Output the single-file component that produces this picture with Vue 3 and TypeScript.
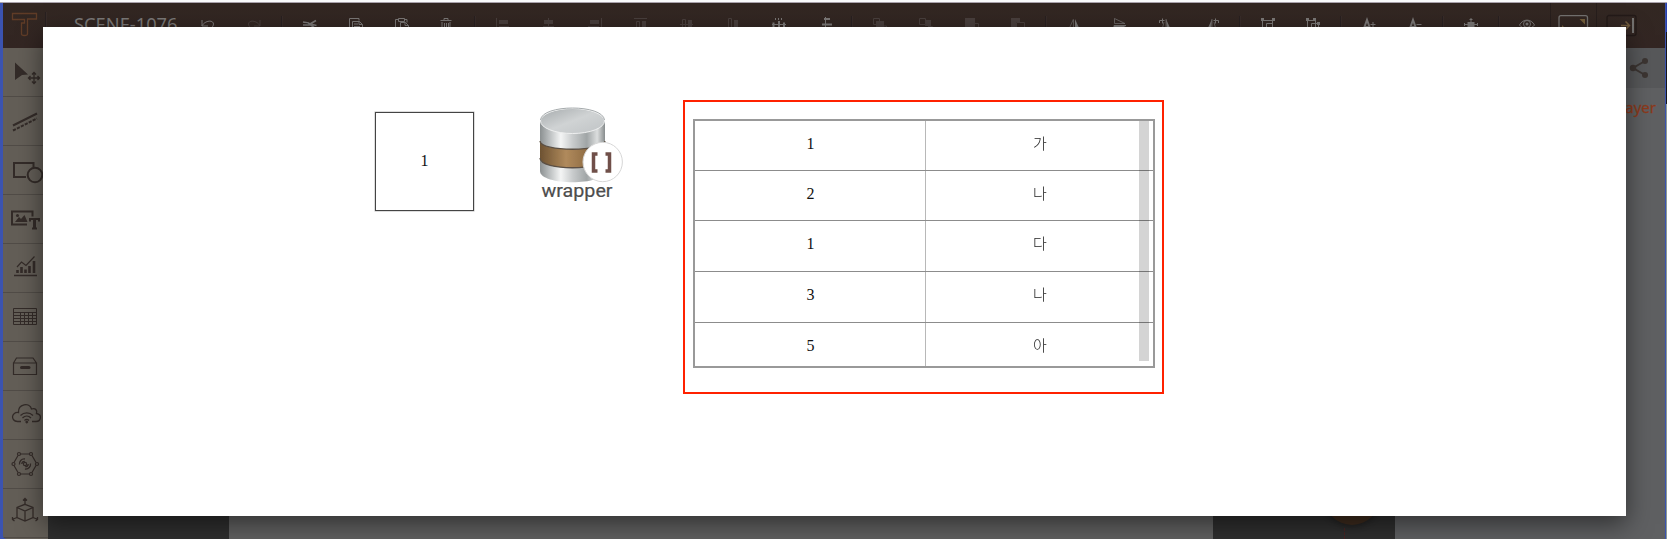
<script setup lang="ts">
interface Tool { name: string; dim?: boolean; svg: string }

const groups: Tool[][] = [
  [
    { name: 'undo', svg: '<path d="M6 6v6h6M6 12C8 7 17 5 17.500 10c0 3-3 5-5 5" fill="none"/>' },
    { name: 'redo', dim: true, svg: '<path d="M18 6v6h-6M18 12C16 7 7 5 6.500 10c0 3 3 5 5 5" fill="none"/>' },
  ],
  [
    { name: 'cut', svg: '<path d="M5 8l5.500 1 6 5M18 6.500l-6 3.500M5 11h7M18.500 11.500l-6-1.500" stroke-width="1.700"/>' },
    { name: 'copy', svg: '<path d="M9 17H5.500V4.500h9.500v2M8.500 7.500h7l3 3v9h-10zM15 7.500v3h3.500M10 10h4M10 12.500h6" fill="none"/>' },
    { name: 'paste', svg: '<path d="M9 17H5.500V5.500h3M14 5.500h3v3M8.500 4.500h6v3h-6zM10.500 8.500h5l3 3v8h-8zM15 8.500v3h3.500" fill="none"/>' },
    { name: 'trash', svg: '<path d="M5.500 6.500h11M9 6V4.500h4V6M7 8v12h8V8M9.500 9v9M11.500 9v9M13.500 9v9" fill="none"/>' },
  ],
  [
    { name: 'align-left', dim: true, svg: '<path d="M5.500 4v16M8 12.500h10"/><path d="M8 6h9v4H8z" fill="currentColor" stroke="none"/>' },
    { name: 'align-center', dim: true, svg: '<path d="M11.500 4v16M6 12.500h11"/><path d="M7 6h9v4H7z" fill="currentColor" stroke="none"/>' },
    { name: 'align-right', dim: true, svg: '<path d="M18.500 4v16M5 12.500h11"/><path d="M7 6h9v4H7z" fill="currentColor" stroke="none"/>' },
    { name: 'align-top', dim: true, svg: '<path d="M5 4.500h13M7.500 20V7.500h3V20" fill="none"/><path d="M13 7h4v9h-4z" fill="currentColor" stroke="none"/>' },
    { name: 'align-middle', dim: true, svg: '<path d="M5 10.500h13M7.500 17V5.500h3V17" fill="none"/><path d="M13 6h4v9h-4z" fill="currentColor" stroke="none"/>' },
    { name: 'align-bottom', dim: true, svg: '<path d="M7.500 18V4.500h3V18" fill="none"/><path d="M13 6h4v12h-4z" fill="currentColor" stroke="none"/>' },
    { name: 'spread-x', svg: '<path d="M8.500 4v2M11.500 4v2M14.500 4v2M5 10.500h14" /><path d="M6.500 8.500v7M12 7v9M17 8.500v7" stroke-width="2"/>' },
    { name: 'spread-y', svg: '<path d="M12.500 3v17"/><path d="M11 5h6M9 10.500h10" stroke-width="2"/>' },
  ],
  [
    { name: 'front', dim: true, svg: '<path d="M8 10.500H5.500v-6h6V7M14 12h4.500v7h-6" fill="none"/><path d="M8 7h8v8H8z" fill="currentColor" stroke="none"/>' },
    { name: 'forward', dim: true, svg: '<path d="M5.500 4.500h6v6h-6zM14 12.500h4.500v6h-6" fill="none"/><path d="M12 6h5v6h-6z" fill="currentColor" stroke="none"/>' },
    { name: 'backward', dim: true, svg: '<path d="M15 9.500h3.500v9h-8" fill="none"/><path d="M5 4h10v10H5z" fill="currentColor" stroke="none"/>' },
    { name: 'back', dim: true, svg: '<path d="M5 4h9v4h-4v6H5z" fill="currentColor" stroke="none"/><path d="M10.500 8.500h8v9h-8z" fill="none"/>' },
  ],
  [
    { name: 'flip-x', svg: '<path d="M11.500 5L7 15M11.500 6v10" fill="none" opacity=".6"/><path d="M13 5l5 11h-5z" fill="currentColor" stroke="none"/>' },
    { name: 'flip-y', svg: '<path d="M6.500 4.500v5H17z" fill="none" opacity=".7"/><path d="M6 11.500h12l-12 5z" fill="currentColor"/>' },
    { name: 'rotate-right', svg: '<path d="M5.500 9V6.500h5M8.500 4.500v5" fill="none"/><path d="M12 5v11M10 8l-2 8" opacity=".7"/><path d="M12 5l5 11h-4z" fill="currentColor" stroke="none"/>' },
    { name: 'rotate-left', svg: '<path d="M18.500 9V6.500h-5M15.500 4.500v5" fill="none"/><path d="M12 5v11M14 8l2 8" opacity=".7"/><path d="M12 5L7 16h4z" fill="currentColor" stroke="none"/>' },
  ],
  [
    { name: 'group', svg: '<path d="M6.500 6.500h10v10h-10zM10.500 9.500h6v6h-6z" fill="none"/><path d="M5 4h3v3H5zM16 4h3v3h-3z" fill="currentColor" stroke="none"/>' },
    { name: 'ungroup', svg: '<path d="M6.500 6.500h8v7h-8zM10.500 9.500h7v7h-7z" fill="none"/><path d="M5 4h3v3H5zM12 4h3v3h-3zM16 8h3v3h-3z" fill="currentColor" stroke="none"/>' },
  ],
  [
    { name: 'font-up', svg: '<path d="M6 17l4-11 4 11M7.500 13h5" fill="none" stroke-width="2"/><path d="M13.500 10.500h5M16 8v5"/>' },
    { name: 'font-down', svg: '<path d="M6 17l4-11 4 11M7.500 13h5" fill="none" stroke-width="2"/><path d="M13.500 10.500h5"/>' },
  ],
  [{ name: 'fit', svg: '<path d="M12 4v16M5 10.500h14M10.500 5.500h3M5.500 9v3M18.500 9v3"/><path d="M8.500 8h7v6h-7z" fill="currentColor" stroke="none"/>' }],
  [{ name: 'preview', svg: '<path d="M4.500 11C8 4.500 16 4.500 19.500 11 16 16 8 16 4.500 11z" fill="none"/><circle cx="12" cy="10" r="3.500" fill="none"/><circle cx="12" cy="10" r="1.500" fill="currentColor" stroke="none"/>' }],
]

const side: string[] = [
  '<path d="M12 14.500L25 26.500l-6 .5-7 5z" fill="currentColor" stroke="none"/><path d="M31 24.500v11M25.500 30h11M29 26.500l2-2 2 2M29 33.500l2 2 2-2M27.500 28l-2 2 2 2M34.500 28l2 2-2 2" fill="none" stroke-width="1.300"/>',
  '<path d="M10 28.500L34 16.500" stroke-width="2"/><path d="M10 33.500L34 21.500" stroke-width="2" stroke-dasharray="3.200 1.200"/>',
  '<path d="M23 31H11V17h19.500v4" fill="none" stroke-width="2"/><circle cx="32" cy="29" r="7.300" fill="none" stroke-width="2"/>',
  '<path d="M24 29.500H9v-13h20.500v5" fill="none" stroke-width="2"/><circle cx="14.500" cy="20.500" r="1.500" fill="currentColor" stroke="none"/><path d="M12 27l4-5 2 2 3.500-4 3 7z" fill="currentColor" stroke="none"/><path d="M27 26.500V24h9v2.500M29 33.500h5" fill="none" stroke-width="2"/><path d="M31.500 24v10" stroke-width="3"/>',
  '<path d="M11 31.500h23" stroke-width="1.500"/><path d="M14.500 29v-3M18.500 29v-6M22.500 29v-3.500M26.500 29v-7M31 29V17" stroke-width="2.600"/><path d="M14 23l4.500-5 4.500 3.500 8.500-9" fill="none" stroke-width="1.200"/>',
  '<path d="M10.500 15.500h23v16h-23zM10.500 19.500h23M10.500 22.500h23M10.500 25.500h23M10.500 28.500h23M17.500 19.500v12M21.500 19.500v12M25.500 19.500v12M29.500 19.500v12" fill="none"/>',
  '<path d="M10.500 21h23v11.500h-23zM10.500 21l3-5h16.500l3.500 5" fill="none" stroke-width="1.200"/><path d="M18.500 25.500h7.500" stroke-width="3" stroke-linecap="round"/>',
  '<path d="M18 30.500h-3.500C7 30 8.500 20.500 15.500 21.500 15 13 26.500 11 28.500 18c4-1.500 6 1.500 5 4.500 6 1 4.500 8-.5 8h-4" fill="none" stroke-width="1.300"/><path d="M17.500 24.500c3.500-3.500 9-3.500 12.500 0M19.500 27c2.500-2.500 6-2.500 8.500 0M21.500 29.500c1.500-1.500 3-1.500 4.500 0" fill="none" stroke-width="1.300"/><circle cx="23.800" cy="31" r="1" fill="currentColor"/>',
  '<g fill="none" stroke-width="1.200"><path d="M17.500 14h9M29 15.500l4 7M33 25.500l-4 7M26.500 34h-9M15 32.500l-4-7M11 22.500l4-7"/><circle cx="16" cy="14" r="1.500"/><circle cx="28" cy="14" r="1.500"/><circle cx="34" cy="24" r="1.500"/><circle cx="28" cy="34" r="1.500"/><circle cx="16" cy="34" r="1.500"/><circle cx="10.500" cy="24" r="1.500"/><circle cx="22" cy="24" r="1.600"/><path d="M16.500 24.500c-.5-3 2-6 5.500-5.500M18.800 24c0-1.500 1.200-2.700 3-2.700M27.500 23.500c.5 3-2 6-5.500 5.500M25.200 24c0 1.500-1.200 2.700-3 2.700" stroke-width="1.300"/></g>',
  '<g fill="none" stroke-width="1.300"><path d="M22 15.300l8 3.200v10l-8 3.500-8-3.500v-10zM14 18.500l8 3.500 8-3.500M22 22v10"/><path d="M22 15V9.500M20 11.500l2-2 2 2M14 28.500l-5 2M9.500 28v2.500l2 1.500M30 28.500l5 2M34.500 28v2.500l-2 1.500"/></g>',
]

const rows: [string, string][] = [['1', '가'], ['2', '나'], ['1', '다'], ['3', '나'], ['5', '아']]
</script>

<template>
  <div class="shell">
    <div class="topline"></div>
    <header class="bar">
      <svg class="logo" width="40" height="45" viewBox="0 0 40 45"><path d="M9.500 10.500h24v5.500h-9v15c0 2-6 2-6 0v-11h3v-3.500H9.500z" fill="none" stroke="#603c27" stroke-width="1.300" /></svg>
      <i class="sep first"></i>
      <span class="title">SCENE-1076</span>
      <template v-for="(g, gi) in groups" :key="gi">
        <i v-if="gi" class="sep"></i>
        <span v-for="t in g" :key="t.name" class="tool" :class="{ dim: t.dim }">
          <svg width="24" height="24" viewBox="0 0 24 24" v-html="t.svg"></svg>
        </span>
      </template>
      <div class="cell"><svg width="32" height="24" viewBox="0 0 32 24"><rect x="2" y="1.700" width="28.500" height="21" rx="2" fill="none" stroke="#747270" stroke-width="1.300" /><path d="M22.500 5H28v5.500zM5 11v7h7z" fill="#755f3c" /></svg></div>
      <div class="cell last"><svg width="32" height="24" viewBox="0 0 32 24"><rect x="1" y="1.500" width="29" height="20" rx="2" fill="none" stroke="#231a18" stroke-width="1.300" /><path d="M15 11.500h8M19.500 7.500l4 4-4 4" fill="none" stroke="#705a3c" stroke-width="1.500" /><path d="M27 4v15" stroke="#747270" stroke-width="2" /></svg></div>
    </header>
    <div class="body">
      <nav class="side">
        <div v-for="(s, i) in side" :key="i" class="item"><svg width="45" height="48" viewBox="0 0 45 48" v-html="s"></svg></div>
      </nav>
      <div class="panel dark left"></div>
      <div class="canvas"></div>
      <div class="panel dark right">
        <div class="fab"></div>
        <div class="guide"></div>
      </div>
      <aside class="props">
        <div class="share"><svg width="22" height="24" viewBox="0 0 22 24" fill="#3c3532"><path d="M17 5L5 12l12 7" fill="none" stroke="#3c3532" stroke-width="2" /><circle cx="17" cy="5" r="3" /><circle cx="5" cy="12" r="3.200" /><circle cx="17" cy="19" r="3" /></svg></div>
        <div class="layer">Layer</div>
      </aside>
    </div>
    <div class="edge"><i class="blue"></i><i class="black"></i></div>

    <section class="modal">
      <div class="box">1</div>
      <svg class="db" width="92" height="100" viewBox="0 0 92 100">
        <defs>
          <linearGradient id="metal"><stop offset="0" stop-color="#8b9091" /><stop offset=".12" stop-color="#b2b6b7" /><stop offset=".32" stop-color="#f4f5f5" /><stop offset=".5" stop-color="#c9cccd" /><stop offset=".72" stop-color="#a0a5a6" /><stop offset=".88" stop-color="#dcdede" /><stop offset="1" stop-color="#878c8d" /></linearGradient>
          <linearGradient id="wood"><stop offset="0" stop-color="#6d5232" /><stop offset=".4" stop-color="#b08a5c" /><stop offset="1" stop-color="#755430" /></linearGradient>
          <linearGradient id="lid" x1="0" y1="0" x2="1" y2="1"><stop offset="0" stop-color="#a6abad" /><stop offset=".5" stop-color="#d0d3d4" /><stop offset="1" stop-color="#bfc3c5" /></linearGradient>
          <filter id="soft"><feGaussianBlur stdDeviation=".7" /></filter>
        </defs>
        <g filter="url(#soft)">
          <path d="M7 18v50c0 15 65 15 65 0V18z" fill="url(#metal)" />
          <path d="M7 38c0 11 65 11 65 0v17c0 13-65 13-65 0z" fill="url(#wood)" />
          <path d="M7 38c0 11 65 11 65 0M7 55c0 13 65 13 65 0" fill="none" stroke="#5b5044" stroke-width="1.300" />
          <ellipse cx="39.500" cy="18" rx="32" ry="12.500" fill="url(#lid)" stroke="#eff0f0" />
          <path d="M7.500 17C9 1 70 1 71.500 17" fill="none" stroke="#a6abad" />
          <circle cx="69.700" cy="59" r="19.700" fill="#fff" stroke="#d6d6d6" />
          <path d="M64.500 51H60.500v17h4M72.500 51h4v17h-4" fill="none" stroke="#6f5048" stroke-width="3.500" />
        </g>
        <text x="8.500" y="94" textLength="71" lengthAdjust="spacingAndGlyphs" class="cap">wrapper</text>
      </svg>
      <div class="frame">
        <div class="grid">
          <div v-for="(r, i) in rows" :key="i" class="row"><span>{{ r[0] }}</span><span class="ko">{{ r[1] }}</span></div>
          <div class="thumb"></div>
        </div>
      </div>
    </section>
  </div>
</template>

<style>
html, body { margin: 0; overflow: hidden; }
</style>
<style scoped>
.shell { position: relative; box-sizing: border-box; width: 1667px; height: 539px; padding: 0 2px 0 3px; background: #3b53b0; overflow: hidden; display: flex; flex-direction: column; font-family: "Noto Sans", sans-serif; }
.topline { flex: none; height: 2px; margin: 0 -2px 0 -3px; background: #fbfcfd; border-bottom: 1px solid #aaa3ac; }
.bar { flex: none; height: 45px; display: flex; align-items: stretch; background: linear-gradient(#322722, #332623); color: #6d6a69; }
.logo { flex: none; width: 40px; margin-right: -2px; }
.sep { flex: none; width: 10px; height: 28px; margin-top: 13px; background: linear-gradient(90deg, transparent 4px, #282020 4px, #282020 5px, #382c29 5px, #382c29 6px, transparent 6px); }
.sep.first { margin-top: 9px; }
.title { flex: none; width: 108.5px; padding-left: 23px; margin-right: 2.5px; padding-top: 8px; font-size: 18.3px; line-height: 26px; color: #7b7978; white-space: nowrap; }
.tool { flex: none; width: 45.9px; padding-top: 11px; text-align: center; font-size: 0; color: #7b7877; }
.tool.dim { color: #493f3d; }
.tool svg, .item svg { stroke: currentColor; }
.cell { flex: none; width: 45px; padding-top: 11px; text-align: center; border-left: 1px solid #271e1c; font-size: 0; }
.cell.last { width: 50px; }
.body { flex: 1; display: flex; min-height: 0; }
.side { flex: none; width: 45px; background: #635e57; color: #332b28; overflow: hidden; border-radius: 0 0 0 4px; }
.item { height: 48px; border-bottom: 1px solid #514c47; font-size: 0; }
.item svg { display: block; }
.dark { flex: none; background: #2f2f2f; }
.left { width: 181px; }
.canvas { width: 984px; background: #616161; }
.right { position: relative; width: 182px; }
.fab { position: absolute; left: 111px; top: 421px; width: 56px; height: 56px; border-radius: 50%; background: #3f2c1e; box-shadow: 0 2px 6px rgba(0, 0, 0, .3); }
.guide { position: absolute; left: 131px; top: 480px; height: 11px; border-left: 1px dashed #4b2424; }
.props { flex: 1; background: #5f6062; }
.share { height: 40px; background: #57585a; display: flex; justify-content: flex-end; align-items: center; box-sizing: border-box; padding-right: 15px; }
.layer { height: 37px; padding-right: 9px; padding-top: 3px; text-align: right; line-height: 32px; font-size: 15px; color: #8c3a1c; -webkit-text-stroke: .3px #8c3a1c; }
.edge { position: absolute; right: 0; top: 3px; width: 1px; height: 536px; background: #8c9993; display: flex; flex-direction: column; }
.blue { height: 29px; background: #2740ae; }
.black { height: 72px; background: #151617; }
.modal { position: absolute; left: 43px; top: 27px; width: 1583px; height: 489px; background: #fff; box-shadow: 0 8px 24px rgba(0, 0, 0, .5); display: flex; align-items: flex-start; font-family: "Liberation Serif", "Noto Sans CJK KR", serif; color: #111; }
.box { flex: none; box-sizing: border-box; width: 99px; height: 99px; margin: 85px 0 0 332px; border: 1px solid #444; box-shadow: 0 0 0 .5px #bbb; text-align: center; font-size: 16px; line-height: 95px; }
.db { flex: none; margin: 76px -2px 0 59px; }
.cap { font: 18px Roboto, sans-serif; fill: #4d4d4d; stroke: #4d4d4d; stroke-width: .2; }
.frame { flex: none; box-sizing: border-box; width: 481px; height: 294px; margin: 73px 0 0 60px; border: 2px solid #ff2100; padding: 17px 8px 15px; }
.grid { position: relative; box-sizing: border-box; width: 462px; height: 249px; border: 2px solid #999; overflow: hidden; }
.row { display: flex; box-sizing: border-box; height: 50.7px; border-bottom: 1px solid #8c8c8c; font-size: 16px; line-height: 46px; text-align: center; }
.row:first-child { height: 49.8px; }
.row:last-of-type { border-bottom: 0; }
.row span { flex: none; width: 231px; }
.row .ko { width: 228px; padding-left: 1px; margin-left: -1px; box-sizing: border-box; border-left: 1px solid #b4b4b4; font-family: "Noto Sans CJK KR", sans-serif; font-size: 15px; font-weight: 300; line-height: 44px; opacity: .95; }
.thumb { position: absolute; right: 4px; top: 0; width: 10px; height: 240px; background: rgba(0, 0, 0, .17); }
</style>
